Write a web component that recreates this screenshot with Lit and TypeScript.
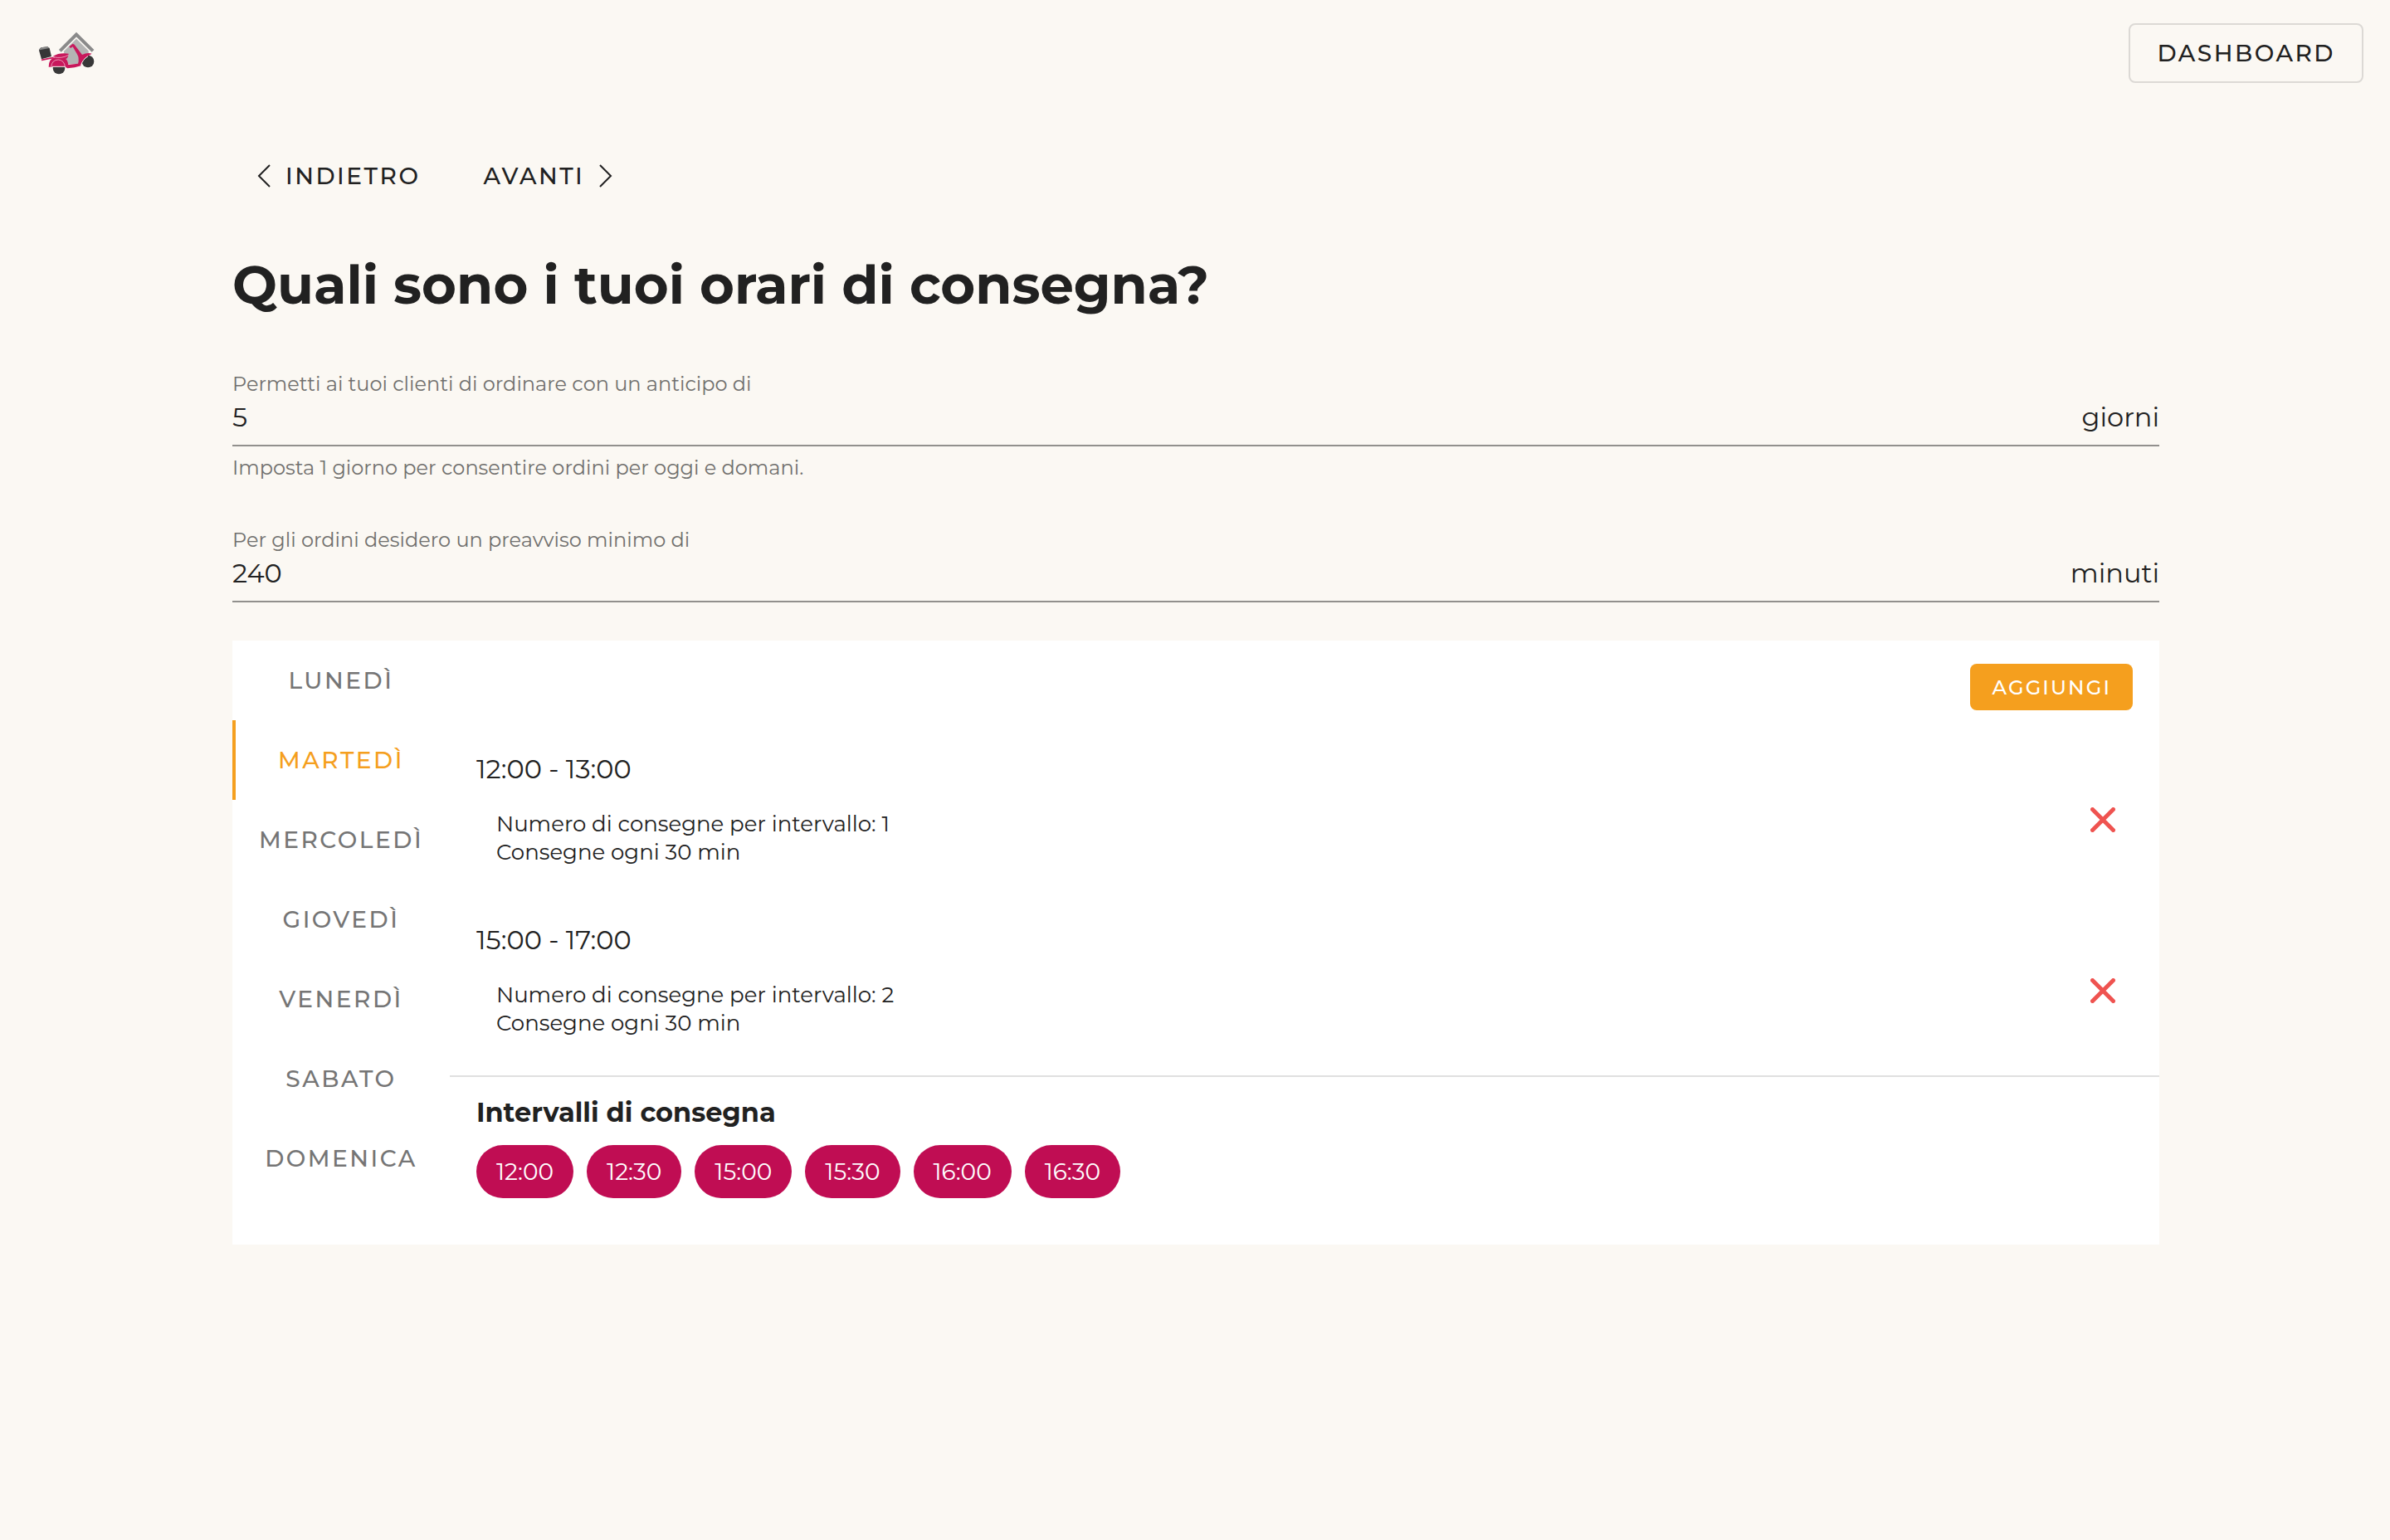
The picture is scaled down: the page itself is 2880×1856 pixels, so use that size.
import { LitElement, html, css } from "lit";
import { customElement, state } from "lit/decorators.js";
import { classMap } from "lit/directives/class-map.js";

interface Slot {
  range: string;
  deliveries: number;
  every: number;
}

const DAYS = ["Lunedì", "Martedì", "Mercoledì", "Giovedì", "Venerdì", "Sabato", "Domenica"];

const SLOTS: Slot[] = [
  { range: "12:00 - 13:00", deliveries: 1, every: 30 },
  { range: "15:00 - 17:00", deliveries: 2, every: 30 },
];

const TIMES = ["12:00", "12:30", "15:00", "15:30", "16:00", "16:30"];

@customElement("app-root")
export class AppRoot extends LitElement {
  @state() private day = 1;

  static styles = css`
    :host {
      display: block;
      min-height: 100vh;
      background: #fbf8f3;
      color: #212121;
      font-family: Montserrat, Inter, "Open Sans", sans-serif;
      font-size: 32px;
      line-height: 40px;
    }
    * {
      box-sizing: border-box;
    }
    button,
    input {
      margin: 0;
      border: 0;
      background: none;
      color: inherit;
      font: inherit;
    }
    button {
      cursor: pointer;
    }
    svg {
      display: block;
      flex: none;
    }
    .caps {
      display: inline-flex;
      align-items: center;
      justify-content: center;
      height: 72px;
      font-size: 28px;
      font-weight: 500;
      letter-spacing: 0.09em;
      text-transform: uppercase;
      text-decoration: none;
      color: inherit;
      white-space: nowrap;
    }
    .top {
      display: flex;
      align-items: center;
      justify-content: space-between;
      padding: 28px 32px 28px 44px;
    }
    .dashboard {
      padding: 0 32px;
      border: 2px solid #dcd9d5;
      border-radius: 8px;
    }
    .page {
      padding: 48px 278px 80px 280px;
    }
    .steps {
      display: flex;
      gap: 16px;
    }
    .step {
      gap: 18px;
      padding: 0 30px;
    }
    .title {
      margin: 55px 0 66px;
      font-size: 64px;
      font-weight: 700;
      line-height: 80px;
    }
    .field {
      display: flex;
      flex-direction: column;
    }
    .label,
    .hint {
      font-size: 24px;
      line-height: 28px;
      color: #71706e;
    }
    .line {
      display: flex;
      padding: 6px 0 13px;
      border-bottom: 2px solid #92908d;
    }
    .value {
      flex: 1;
      min-width: 0;
      height: 40px;
      padding: 0;
      outline: none;
    }
    .hint {
      margin: 12px 0 59px;
    }
    .card {
      display: flex;
      margin-top: 46px;
      background: #fff;
    }
    .days {
      display: flex;
      flex-direction: column;
      flex: none;
      width: 262px;
    }
    .day {
      height: 96px;
      padding: 0;
      color: #757575;
    }
    .day.active {
      color: #f59f1e;
      box-shadow: inset 4px 0 #f59f1e;
    }
    .panel {
      flex: 1;
      min-width: 0;
      padding-top: 28px;
    }
    .actions {
      display: flex;
      justify-content: flex-end;
      padding: 0 32px 24px;
    }
    .add {
      height: 56px;
      padding: 2px 26px 0;
      border-radius: 8px;
      background: #f59f1e;
      color: #fff;
      font-size: 24px;
    }
    .slots {
      margin: 0;
      padding: 0 0 4px;
      list-style: none;
      border-bottom: 2px solid #e0e0e0;
    }
    .slot {
      display: flex;
      align-items: center;
      justify-content: space-between;
      padding: 0 32px;
    }
    .info {
      padding: 27px 0 42px;
    }
    .range {
      margin: 0 0 29px;
      font-size: 32px;
      font-weight: 400;
      line-height: 40px;
    }
    .detail {
      margin: 0 0 0 24px;
      font-size: 26px;
      line-height: 34px;
    }
    .remove {
      display: flex;
      align-items: center;
      justify-content: center;
      width: 72px;
      height: 72px;
      margin-top: 10px;
      padding: 0;
    }
    .intervals {
      padding: 23px 32px 56px;
    }
    .subtitle {
      margin: 0 0 19px;
      font-size: 32px;
      font-weight: 700;
      line-height: 40px;
    }
    .chips {
      display: flex;
      flex-wrap: wrap;
      gap: 16px;
      margin: 0;
      padding: 0;
      list-style: none;
    }
    .chip {
      padding: 0 24px;
      border-radius: 32px;
      background: #c00d53;
      color: #fff;
      font-size: 28px;
      line-height: 64px;
    }
  `;

  private logo() {
    return html`<svg width="72" height="54" viewBox="42 51 216 162" role="img" aria-label="Home">
      <path d="M186 80 L230 124 V150 L190 172 H155 L140 126 Z" fill="#b4b4b4" />
      <path d="M127 124 L186 65 L246 124" fill="none" stroke="#8a8a8a" stroke-width="12" />
      <circle cx="228" cy="162" r="22" fill="#383838" />
      <circle cx="123" cy="186" r="22" fill="#383838" />
      <path d="M51 122 Q53 112 64 111 L82 109 L89 114 L96 144 L60 154 Z" fill="#363637" />
      <path d="M52 120 Q54 112 64 111 L82 109 L88 114 L54 121 Z" fill="#888" />
      <path d="M60 157 L104 148" stroke="#c8185c" stroke-width="5" />
      <path
        d="M86 182 Q85 154 108 147 L102 143 Q125 129 158 134 Q157 149 148 153 Q154 158 157 174 L192 170 Q198 150 188 134 L173 109 L165 114 L160 109 L173 98 L179 101 L207 138 Q225 129 242 134 Q232 139 226 145 Q206 158 202 178 L180 184 L154 187 Q148 184 145 180 Z"
        fill="#c8185c"
      />
      <path d="M104 146 Q132 153 158 139 M95 181 Q98 156 121 156 Q143 158 145 182" fill="none" stroke="#f6d5e0" stroke-width="2" />
      <path d="M98 181 H145 M203 176 Q208 156 228 143" fill="none" stroke="#fbf8f3" stroke-width="3" />
    </svg>`;
  }

  private chevron(d: string) {
    return html`<svg width="16" height="28" viewBox="0 0 16 28" fill="none" stroke="currentColor" stroke-width="2" aria-hidden="true">
      <path d=${d} />
    </svg>`;
  }

  private slotRow(slot: Slot) {
    return html`<li class="slot">
      <div class="info">
        <h3 class="range">${slot.range}</h3>
        <p class="detail">Numero di consegne per intervallo: ${slot.deliveries}</p>
        <p class="detail">Consegne ogni ${slot.every} min</p>
      </div>
      <button class="remove" type="button" aria-label="Rimuovi ${slot.range}">
        <svg width="30" height="30" viewBox="0 0 30 30" fill="none" stroke="#ef5350" stroke-width="5" stroke-linecap="round" aria-hidden="true">
          <path d="M2.5 2.5 L27.5 27.5 M27.5 2.5 L2.5 27.5" />
        </svg>
      </button>
    </li>`;
  }

  render() {
    return html`
      <header class="top">
        <a href="#home">${this.logo()}</a>
        <a class="caps dashboard" href="#dashboard">Dashboard</a>
      </header>
      <main class="page">
        <nav class="steps">
          <button class="caps step" type="button">${this.chevron("M15 1 L2 14 L15 27")}Indietro</button>
          <button class="caps step" type="button">Avanti${this.chevron("M1 1 L14 14 L1 27")}</button>
        </nav>
        <h1 class="title">Quali sono i tuoi orari di consegna?</h1>
        <div class="field">
          <label class="label" for="advance">Permetti ai tuoi clienti di ordinare con un anticipo di</label>
          <div class="line">
            <input class="value" id="advance" type="text" inputmode="numeric" value="5" aria-describedby="advance-hint" />
            <span>giorni</span>
          </div>
          <p class="hint" id="advance-hint">Imposta 1 giorno per consentire ordini per oggi e domani.</p>
        </div>
        <div class="field">
          <label class="label" for="notice">Per gli ordini desidero un preavviso minimo di</label>
          <div class="line">
            <input class="value" id="notice" type="text" inputmode="numeric" value="240" />
            <span>minuti</span>
          </div>
        </div>
        <section class="card">
          <div class="days" role="tablist" aria-orientation="vertical">
            ${DAYS.map(
              (name, i) => html`<button
                class=${classMap({ caps: true, day: true, active: i === this.day })}
                type="button"
                role="tab"
                aria-selected=${i === this.day ? "true" : "false"}
                @click=${() => (this.day = i)}
              >${name}</button>`
            )}
          </div>
          <div class="panel" role="tabpanel">
            <div class="actions">
              <button class="caps add" type="button">Aggiungi</button>
            </div>
            <ul class="slots">
              ${SLOTS.map((slot) => this.slotRow(slot))}
            </ul>
            <div class="intervals">
              <h2 class="subtitle">Intervalli di consegna</h2>
              <ul class="chips">
                ${TIMES.map((time) => html`<li class="chip">${time}</li>`)}
              </ul>
            </div>
          </div>
        </section>
      </main>
    `;
  }
}
